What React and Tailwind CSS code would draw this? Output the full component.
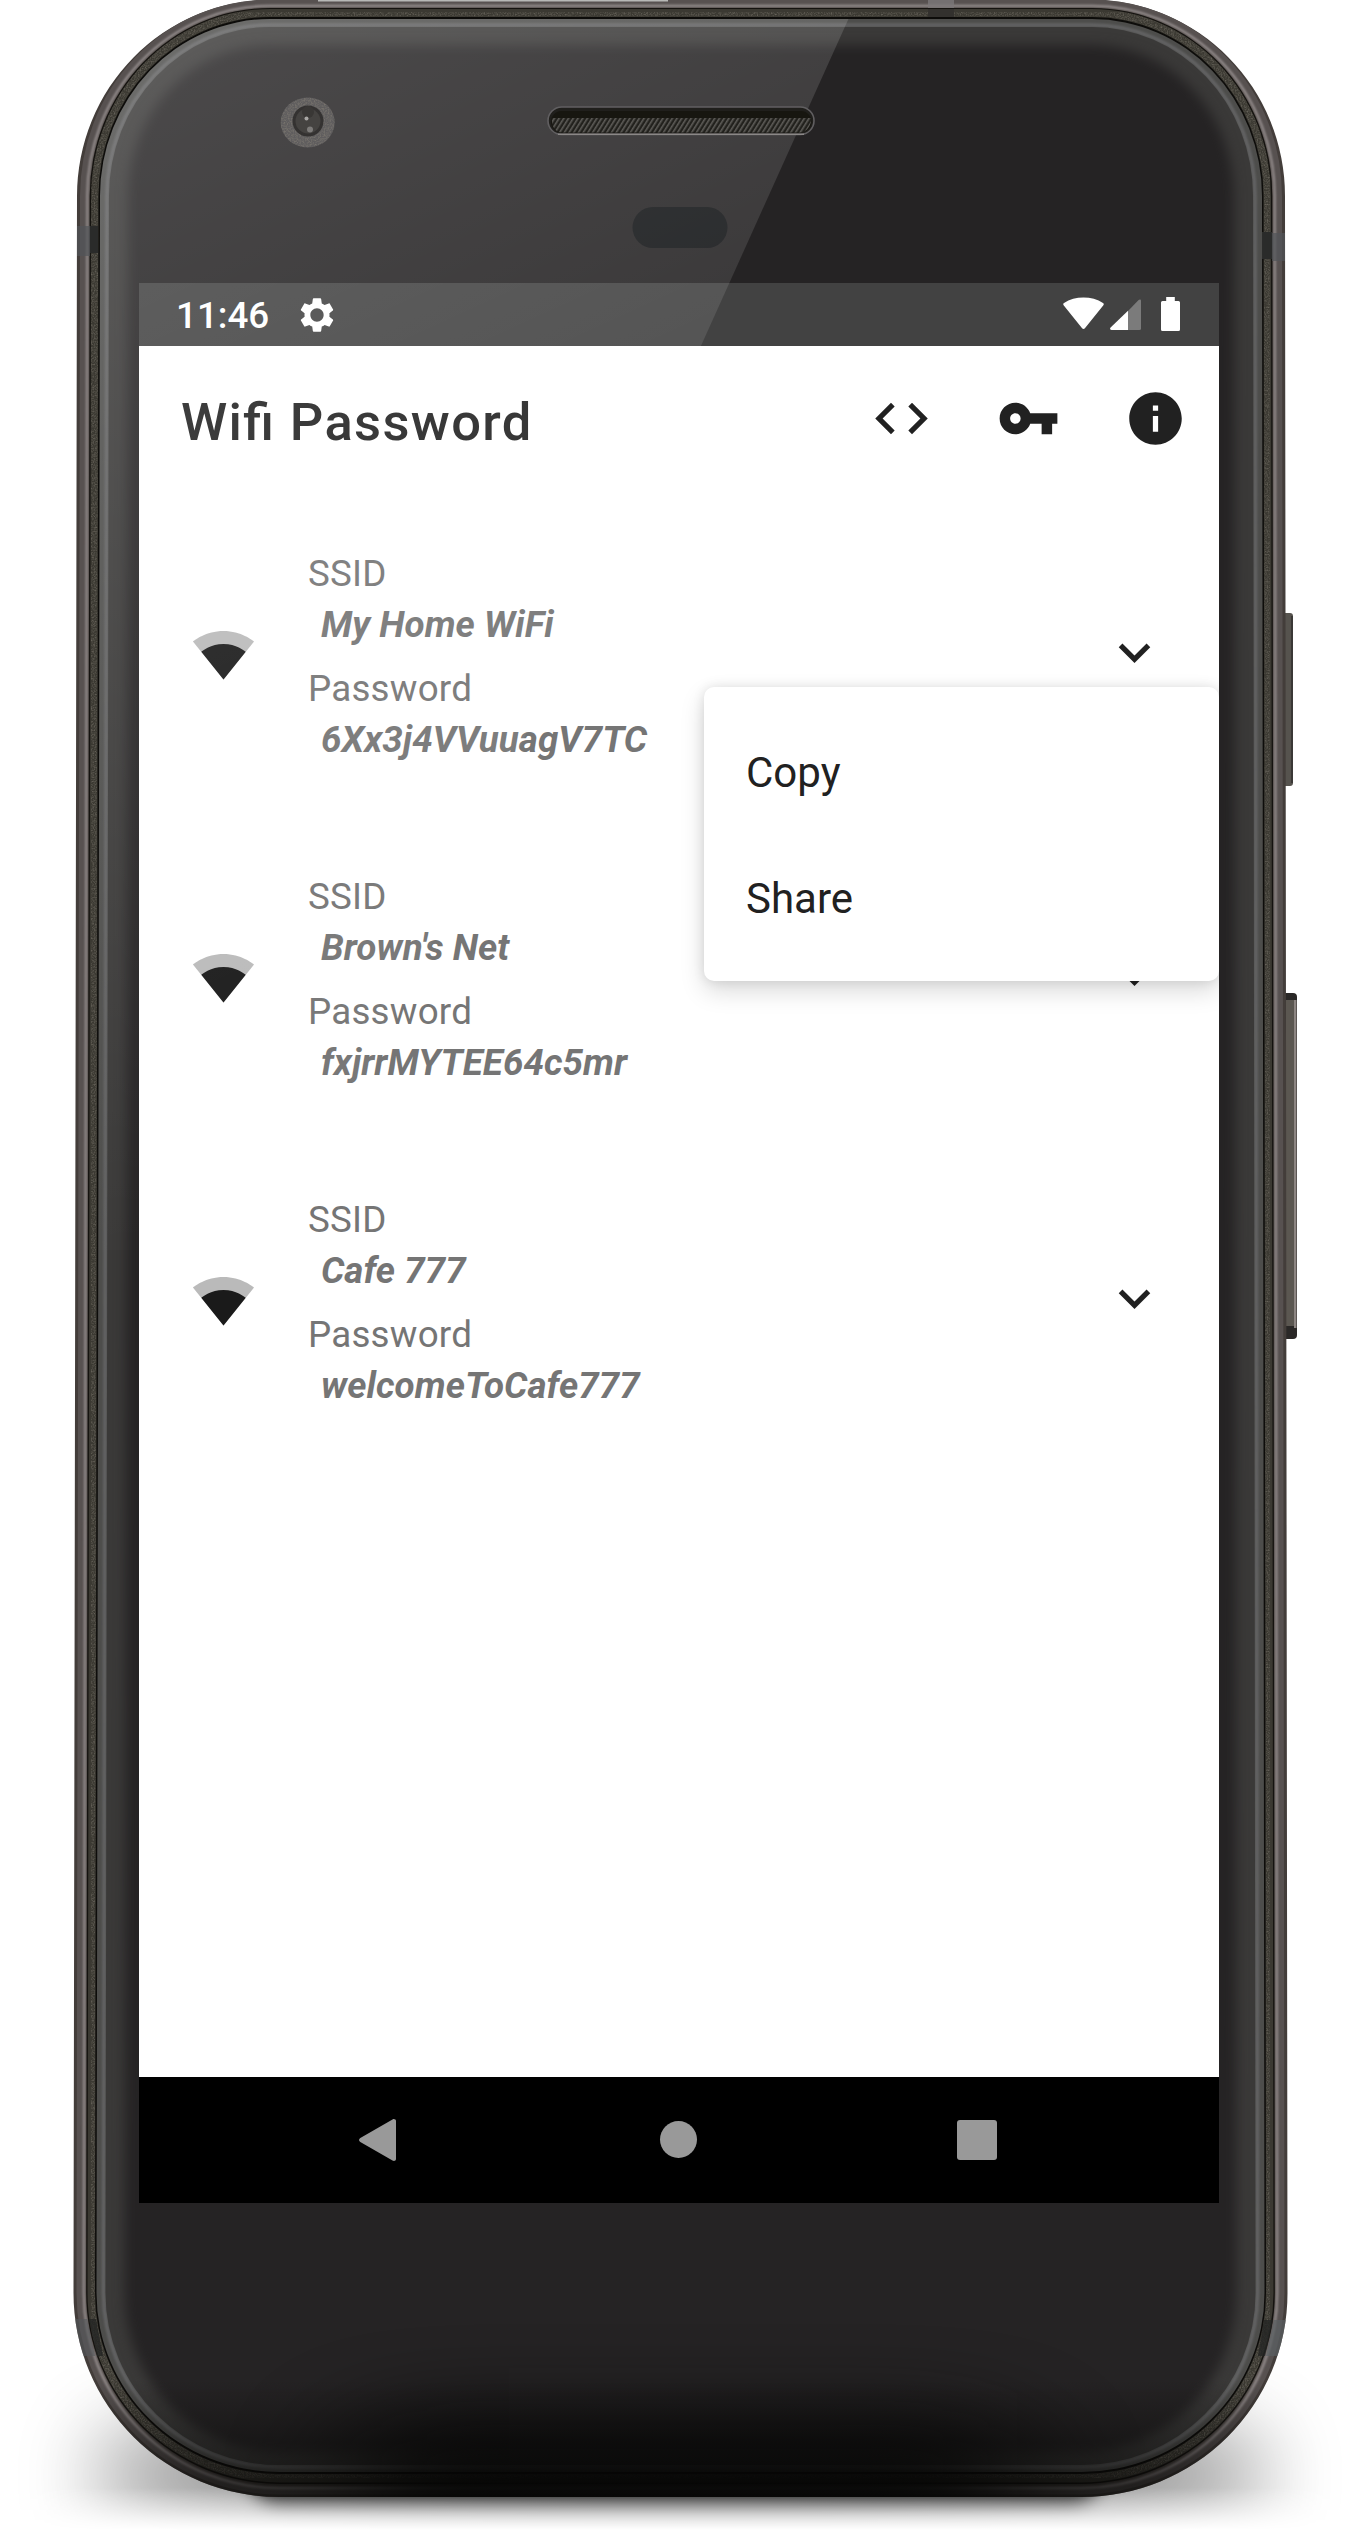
import React from "react";

const networks = [
  { ssid: "My Home WiFi", password: "6Xx3j4VVuuagV7TC" },
  { ssid: "Brown's Net", password: "fxjrrMYTEE64c5mr" },
  { ssid: "Cafe 777", password: "welcomeToCafe777" },
];

// Outline of the handset, inset from the outer edge by the given amounts.
// The body is very slightly wider at the bottom than at the top.
function outline(side, top, bottom) {
  const lt = 77 + side;
  const lb = 73.5 + side;
  const rt = 1285 - side;
  const rb = 1287.5 - side;
  const t = top;
  const b = 2497 - bottom;
  const rx = 193 - side;
  const ry = 196 - top;
  const bx = 206 - side;
  const by = 204 - bottom;
  return `M${lt + rx} ${t}H${rt - rx}A${rx} ${ry} 0 0 1 ${rt} ${t + ry}L${rb} ${b - by}A${bx} ${by} 0 0 1 ${rb - bx} ${b}H${lb + bx}A${bx} ${by} 0 0 1 ${lb} ${b - by}L${lt} ${t + ry}A${rx} ${ry} 0 0 1 ${lt + rx} ${t}Z`;
}

function DeviceBody() {
  return (
    <svg className="absolute inset-0" width="1370" height="2532" viewBox="0 0 1370 2532" fill="none" aria-hidden="true">
      <defs>
        <filter id="grain" x="0" y="0" width="100%" height="100%" colorInterpolationFilters="sRGB">
          <feTurbulence type="fractalNoise" baseFrequency="0.7" numOctaves="2" seed="4" result="n" />
          <feColorMatrix in="n" type="matrix" values="0 0 0 0 0.52  0 0 0 0 0.5  0 0 0 0 0.46  1.6 0 0 0 -0.62" result="c" />
          <feComposite in="c" in2="SourceGraphic" operator="in" />
        </filter>
        <filter id="soft8" x="-10%" y="-100%" width="120%" height="300%" colorInterpolationFilters="sRGB"><feGaussianBlur stdDeviation="9" /></filter>
        <filter id="softGlass" x="-10%" y="-10%" width="120%" height="120%" colorInterpolationFilters="sRGB"><feGaussianBlur stdDeviation="6" /></filter>
        <filter id="shadowBlur" filterUnits="userSpaceOnUse" x="-300" y="2100" width="1970" height="700"><feGaussianBlur stdDeviation="36 46" /></filter>
        <filter id="darkBlur" filterUnits="userSpaceOnUse" x="-100" y="2100" width="1570" height="800" colorInterpolationFilters="sRGB"><feGaussianBlur stdDeviation="62 46" /></filter>
        <filter id="line" x="-5%" y="-5%" width="110%" height="110%" colorInterpolationFilters="sRGB"><feGaussianBlur stdDeviation="1.1" /></filter>
        <linearGradient id="shadowFade" x1="0" y1="2488" x2="0" y2="2530" gradientUnits="userSpaceOnUse">
          <stop offset="0" stopColor="#fff" />
          <stop offset="0.5" stopColor="#888" />
          <stop offset="1" stopColor="#000" />
        </linearGradient>
        <mask id="shadowMask" maskUnits="userSpaceOnUse" x="0" y="2200" width="1370" height="332">
          <rect x="0" y="2200" width="1370" height="332" fill="url(#shadowFade)" />
        </mask>
        <linearGradient id="bottomDark" x1="0" y1="2380" x2="0" y2="2485" gradientUnits="userSpaceOnUse">
          <stop offset="0" stopColor="#060605" stopOpacity="0" />
          <stop offset="1" stopColor="#060605" stopOpacity="0.66" />
        </linearGradient>
        <pattern id="mesh" width="4" height="4" patternUnits="userSpaceOnUse" patternTransform="rotate(32)">
          <rect width="4" height="4" fill="#22211d" />
          <rect width="1.6" height="4" fill="#5e5c58" />
        </pattern>
        <clipPath id="glass"><path d={outline(23, 19, 25)} /></clipPath>
        <clipPath id="body"><path d={outline(0, 0, 0)} /></clipPath>
      </defs>

      <g mask="url(#shadowMask)">
        <ellipse cx="680" cy="2475" rx="600" ry="62" fill="#000" opacity="0.56" filter="url(#shadowBlur)" />
        <rect x="250" y="2440" width="850" height="66" rx="30" fill="#000" opacity="0.88" filter="url(#soft8)" />
      </g>

      {/* power and volume keys */}
      <rect x="1280" y="613" width="13" height="173" rx="3" fill="#56534e" />
      <rect x="1291" y="616" width="2" height="167" fill="#3a3835" />
      <rect x="1280" y="993" width="17" height="346" rx="4" fill="#2a2827" />
      <rect x="1286" y="1000" width="8" height="326" fill="#5b5751" />
      <rect x="1294" y="1000" width="2.5" height="328" fill="#8d8683" />

      {/* metal band */}
      <path d={outline(0, 0, 0)} fill="#433d3a" />
      <path d={outline(6.5, 3, 6)} stroke="#575150" strokeWidth="7" />
      <path d={outline(10.5, 6, 9)} stroke="#958e8e" strokeWidth="2.6" filter="url(#line)" />
      <path d={outline(12.7, 8, 13)} fill="#14120f" />
      <path d={outline(14, 9, 14.5)} fill="#3b3932" />
      <path d={outline(17.6, 12.8, 19)} stroke="#3b3932" strokeWidth="7" opacity="0.75" filter="url(#grain)" />
      <path d={outline(21.5, 17, 23)} fill="#0d0c0a" />

      {/* antenna breaks */}
      <g clipPath="url(#body)">
        <rect x="77" y="226" width="13" height="30" fill="#515459" opacity="0.7" />
        <rect x="90" y="226" width="8" height="27" fill="#2a2b2a" />
        <rect x="1262" y="232" width="10" height="27" fill="#2a2b2a" />
        <rect x="1272" y="233" width="13" height="28" fill="#515459" opacity="0.7" />
        <rect x="928" y="0" width="26" height="8" fill="#7c7879" opacity="0.8" />
        <rect x="928" y="9" width="26" height="8" fill="#33312e" />
        <rect x="318" y="0" width="350" height="1.5" fill="#cfd2cf" opacity="0.8" />
        <path d="M72 2319H87L95 2356H80Z" fill="#54565a" opacity="0.6" />
        <path d="M89 2319H96L103 2356H97Z" fill="#232423" opacity="0.8" />
        <path d="M1274 2320H1288L1280 2356H1266Z" fill="#5a5f63" opacity="0.7" />
        <path d="M1264 2320H1273L1265 2356H1258Z" fill="#232423" opacity="0.8" />
      </g>

      {/* front glass */}
      <path d={outline(23, 19, 25)} fill="#4d4d4b" />
      <path d={outline(30, 25, 30)} stroke="#636364" strokeWidth="3.5" filter="url(#line)" />
      <path d={outline(32, 27, 32)} fill="#3a3938" />
      <g clipPath="url(#glass)">
        <path d={outline(51, 45, 44)} fill="#252324" filter="url(#softGlass)" />
      </g>
      <g clipPath="url(#body)">
        <rect x="350" y="2425" width="670" height="200" rx="60" fill="#050505" opacity="0.96" filter="url(#darkBlur)" />
      </g>
      <path d={outline(0, 0, 0)} fill="url(#bottomDark)" />

      {/* sensor window */}
      <rect x="632.500" y="207" width="95" height="41" rx="20.5" fill="#121416" />
    </svg>
  );
}

function Glare() {
  return (
    <svg className="pointer-events-none absolute inset-0" width="1370" height="2532" viewBox="0 0 1370 2532" fill="none" aria-hidden="true">
      <defs>
        <linearGradient id="glare" x1="150" y1="20" x2="637" y2="1084" gradientUnits="userSpaceOnUse">
          <stop offset="0" stopColor="#fff" stopOpacity="0.18" />
          <stop offset="1" stopColor="#fff" stopOpacity="0" />
        </linearGradient>
      </defs>
      <g clipPath="url(#glass)">
        <path d="M60 0H857L293 1250H60Z" fill="url(#glare)" />
      </g>

      {/* front camera */}
      <ellipse cx="307.7" cy="122.5" rx="27" ry="25" fill="#5f5d5e" />
      <ellipse cx="307.7" cy="122.5" rx="27" ry="25" fill="#fff" filter="url(#grain)" />
      <circle cx="308" cy="121" r="15.5" fill="#343231" />
      <circle cx="308" cy="121" r="12.500" fill="#454341" />
      <circle cx="308" cy="112" r="6" fill="#393735" />
      <circle cx="306.5" cy="118.5" r="2" fill="#a9a7a5" />
      <circle cx="310" cy="129.5" r="3" fill="#7d7b79" />

      {/* earpiece */}
      <rect x="548" y="107" width="266" height="27.5" rx="13.7" fill="#201f1c" stroke="#615f61" strokeWidth="1.6" />
      <rect x="551" y="111" width="260.500" height="21.5" rx="10.7" fill="#171610" />
      <path d="M552 118H811C812 127 805 132.500 800 132.500H562C556 132.500 551 127 552 118Z" fill="url(#mesh)" />
      <path d="M558 134.300H804" stroke="#8b8887" strokeWidth="1.5" />
    </svg>
  );
}

function Icon({ d, className, box = "0 0 24 24" }) {
  return (
    <svg className={className} viewBox={box} fill="currentColor" aria-hidden="true">
      <path d={d} />
    </svg>
  );
}

function StatusBar() {
  return (
    <header className="flex h-[63px] shrink-0 items-center bg-[#424242] pl-[37px] pr-[39px] text-white">
      <span className="mt-[3px] w-[121px] text-[36.75px] leading-none font-medium">11:46</span>
      <Icon
        className="size-[40px]"
        d="M19.43 12.98c.04-.32.07-.64.07-.98s-.03-.66-.07-.98l2.11-1.65c.19-.15.24-.42.12-.64l-2-3.460c-.12-.22-.39-.3-.61-.22l-2.490 1c-.52-.4-1.080-.73-1.690-.98l-.38-2.650C14.460 2.180 14.250 2 14 2h-4c-.25 0-.46.18-.49.42l-.38 2.650c-.61.25-1.170.59-1.690.98l-2.490-1c-.23-.09-.49 0-.61.22l-2 3.460c-.13.22-.07.49.12.64l2.110 1.650c-.04.32-.07.65-.07.98s.03.66.07.98l-2.110 1.650c-.19.15-.24.42-.12.64l2 3.460c.12.22.39.3.61.22l2.490-1c.52.4 1.080.73 1.690.98l.38 2.650c.03.24.24.42.49.42h4c.25 0 .46-.18.49-.42l.38-2.650c.61-.25 1.170-.59 1.690-.98l2.490 1c.23.09.49 0 .61-.22l2-3.460c.12-.22.07-.49-.12-.64l-2.110-1.650zM12 16c-2.210 0-4-1.790-4-4s1.790-4 4-4 4 1.790 4 4-1.790 4-4 4z"
      />
      <div className="ml-auto flex items-center">
        <svg className="mb-[2px] h-[33px] w-[41px]" viewBox="0 0 41 33" fill="currentColor" aria-hidden="true">
          <path d="M.8 8.500C-.1 7.600.1 6.700 1 6C6.500 2.200 13.500.5 20.500.5S34.500 2.200 40 6c.9.7 1.100 1.600.2 2.500L21.900 31.200c-.8 1-2 1-2.800 0Z" />
        </svg>
        <svg className="ml-[6px] h-[32px] w-[31px]" viewBox="0 0 31 32" fill="currentColor" aria-hidden="true">
          <path opacity="0.3" d="M31 1.600V29.500Q31 31 29.500 31H18V12L28.600 1C29.600 0 31 .3 31 1.600Z" />
          <path d="M18 11.700V31H1.500C0 31-.4 29.600.6 28.600Z" />
        </svg>
        <svg className="mb-px ml-[20px] h-[34px] w-[19px]" viewBox="0 0 19 34" fill="currentColor" aria-hidden="true">
          <path d="M5.200 0H13.800V4H17.500Q19 4 19 5.500V32.500Q19 34 17.500 34H1.500Q0 34 0 32.500V5.500Q0 4 1.500 4H5.200Z" />
        </svg>
      </div>
    </header>
  );
}

const actions = [
  { label: "Source code", d: "M9.400 16.600L4.800 12l4.600-4.600L8 6l-6 6 6 6 1.400-1.400zm5.200 0l4.600-4.600-4.600-4.600L16 6l6 6-6 6-1.400-1.400z" },
  { label: "Passwords", d: "M12.650 10C11.830 7.670 9.610 6 7 6c-3.310 0-6 2.690-6 6s2.690 6 6 6c2.610 0 4.830-1.670 5.650-4H17v4h4v-4h2v-4H12.650zM7 14c-1.100 0-2-.9-2-2s.9-2 2-2 2 .9 2 2-.9 2-2 2z" },
  { label: "About", d: "M12 2C6.480 2 2 6.480 2 12s4.480 10 10 10 10-4.480 10-10S17.520 2 12 2zm1 15h-2v-6h2v6zm0-8h-2V7h2v2z" },
];

function AppBar() {
  return (
    <div className="flex h-[147px] shrink-0 items-center pl-[42px] text-[#212121]">
      <h1 className="mt-[5px] text-[52.5px] leading-[62px] font-medium tracking-[0.026em] [font-feature-settings:'liga']">Wifi Password</h1>
      <div className="mb-[2px] ml-auto flex">
        {actions.map((a) => (
          <button key={a.label} aria-label={a.label} className="flex h-[126px] w-[127px] items-center justify-center">
            <Icon className="size-[63px]" d={a.d} />
          </button>
        ))}
      </div>
    </div>
  );
}

function NetworkRow({ ssid, password }) {
  return (
    <li className="flex h-[323px] items-center pl-[53px] pr-[53px]">
      <svg className="size-[63px] text-[#1a1a1a]" viewBox="0 0 24 24" fill="currentColor" aria-hidden="true">
        <path fillOpacity="0.3" d="M12.010 21.490L23.640 7c-.45-.34-4.930-4-11.640-4C5.280 3 .81 6.660.36 7l11.630 14.490.01.01.01-.01z" />
        <path d="M3.530 10.950l8.460 10.540.01.01.01-.01 8.460-10.540C20.040 10.620 16.810 8 12 8c-4.810 0-8.040 2.620-8.470 2.950z" />
      </svg>
      <dl className="ml-[53px] mt-[4px] text-[36.75px] leading-[51px] text-[#757575]">
        <dt className="tracking-[0.006em]">SSID</dt>
        <dd className="pl-[13px] font-bold italic tracking-[0.001em]">{ssid}</dd>
        <dt className="mt-[13px] tracking-[0.006em]">Password</dt>
        <dd className="pl-[13px] font-bold italic tracking-[0.001em]">{password}</dd>
      </dl>
      <Icon className="ml-auto mb-[5px] size-[63px] text-[#212121]" d="M16.590 8.590L12 13.170 7.410 8.590 6 10l6 6 6-6z" />
    </li>
  );
}

function NavBar() {
  return (
    <nav className="flex h-[126px] shrink-0 items-center justify-between bg-black pl-[220px] pr-[222px] text-[#999]">
      <svg className="h-[42px] w-[37px]" viewBox="0 0 37 42" fill="currentColor" aria-hidden="true">
        <path d="M33.500.4C35 -.4 37 .3 37 2V40C37 41.700 35 42.400 33.500 41.500L1.300 23C-.4 22-.4 20 1.300 19Z" />
      </svg>
      <span className="ml-[3px] mb-px size-[37px] rounded-full bg-[#999]" />
      <span className="size-[40px] rounded-[3px] bg-[#999]" />
    </nav>
  );
}

export default function App() {
  return (
    <main className="relative h-[2532px] w-[1370px] overflow-hidden bg-white font-['Roboto',sans-serif]">
      <DeviceBody />
      <div className="pt-[283px] pl-[139px]">
        <section className="relative flex h-[1920px] w-[1080px] flex-col overflow-hidden bg-white">
          <StatusBar />
          <AppBar />
          <ul className="grow">
            {networks.map((n) => (
              <NetworkRow key={n.ssid} {...n} />
            ))}
          </ul>
          <NavBar />
          <div
            role="menu"
            className="absolute top-[404px] right-0 w-[515px] rounded-[10px] bg-white py-[21px] text-[42px] text-[#212121] shadow-[0_10px_24px_rgba(0,0,0,0.15),0_0_12px_rgba(0,0,0,0.1)]"
          >
            {["Copy", "Share"].map((item) => (
              <div key={item} role="menuitem" className="flex h-[126px] items-center pt-[3px] pl-[42px]">
                {item}
              </div>
            ))}
          </div>
        </section>
      </div>
      <Glare />
    </main>
  );
}
